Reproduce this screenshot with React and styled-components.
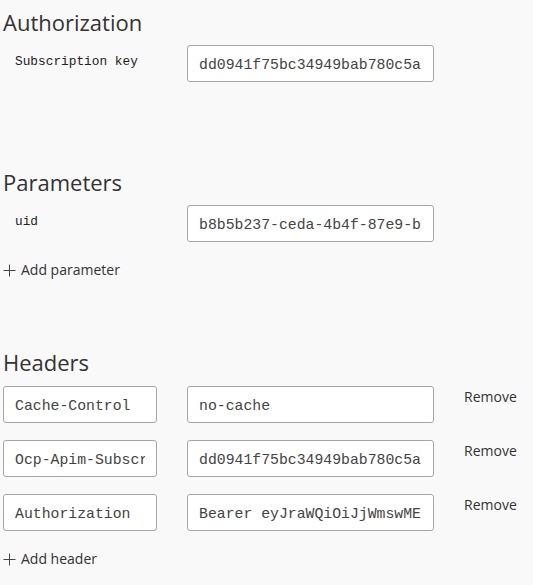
import React from "react";
import styled, { createGlobalStyle } from "styled-components";

const Global = createGlobalStyle`
  html, body { margin: 0; padding: 0; background: #f9f9f9; }
  body { font-family: "Open Sans", "Noto Sans", sans-serif; color: #333; }
`;

const Page = styled.div`
  padding: 7px 0 0 3px;
  width: 530px;
  display: flex;
  flex-direction: column;
`;

const Section = styled.section`
  display: flex;
  flex-direction: column;
  margin-top: ${(p) => p.$top || 0}px;
`;

const Heading = styled.h2`
  margin: 0 0 ${(p) => p.$gap || 8}px 0;
  font-size: 22px;
  line-height: 30px;
  font-weight: 400;
  color: #333;
`;

const Row = styled.div`
  display: flex;
  align-items: flex-start;
  margin-bottom: ${(p) => p.$gap || 0}px;
`;

const Label = styled.div`
  width: 172px;
  padding: 9px 0 0 12px;
  font-family: "Liberation Mono", monospace;
  font-size: 12.8px;
  color: #222;
`;

const Input = styled.input`
  box-sizing: border-box;
  width: ${(p) => p.$w}px;
  height: 37px;
  margin-right: ${(p) => p.$mr || 0}px;
  padding: 2px 11px 0;
  border: 1px solid #a6a6a6;
  border-radius: 3px;
  background: #fff;
  font-family: "Liberation Mono", monospace;
  font-size: 14.8px;
  color: #444;
  outline: none;
`;

const RemoveLink = styled.a`
  margin: 1px 0 0 30px;
  font-size: 14px;
  line-height: 20px;
  color: #333;
  cursor: pointer;
`;

const AddLink = styled.a`
  display: flex;
  align-items: center;
  gap: 5px;
  margin-top: ${(p) => p.$top}px;
  font-size: 14px;
  line-height: 20px;
  color: #333;
  cursor: pointer;
`;

const Plus = () => (
  <svg width="13" height="13" viewBox="0 0 13 13">
    <path d="M6.5 0.5v12M0.5 6.5h12" stroke="#444" strokeWidth="1" fill="none" />
  </svg>
);

const headers = [
  ["Cache-Control", "no-cache"],
  ["Ocp-Apim-Subscription-Key", "dd0941f75bc34949bab780c5a7e0e2e1"],
  ["Authorization", "Bearer eyJraWQiOiJjWmswME1hNkxDd3U1"],
];

export default function App() {
  return (
    <Page>
      <Global />
      <Section>
        <Heading>Authorization</Heading>
        <Row>
          <Label>Subscription key</Label>
          <Input $w={247} defaultValue="dd0941f75bc34949bab780c5a7e0e2e1" />
        </Row>
      </Section>
      <Section $top={85}>
        <Heading>Parameters</Heading>
        <Row>
          <Label>uid</Label>
          <Input $w={247} defaultValue="b8b5b237-ceda-4b4f-87e9-b2a1c3d4e5f6" />
        </Row>
        <AddLink $top={18}>
          <Plus />
          Add parameter
        </AddLink>
      </Section>
      <Section $top={67}>
        <Heading $gap={9}>Headers</Heading>
        {headers.map(([k, v], i) => (
          <Row key={k} $gap={i < headers.length - 1 ? 17 : 0}>
            <Input $w={154} $mr={30} defaultValue={k} />
            <Input $w={247} defaultValue={v} />
            <RemoveLink>Remove</RemoveLink>
          </Row>
        ))}
        <AddLink $top={18}>
          <Plus />
          Add header
        </AddLink>
      </Section>
    </Page>
  );
}
